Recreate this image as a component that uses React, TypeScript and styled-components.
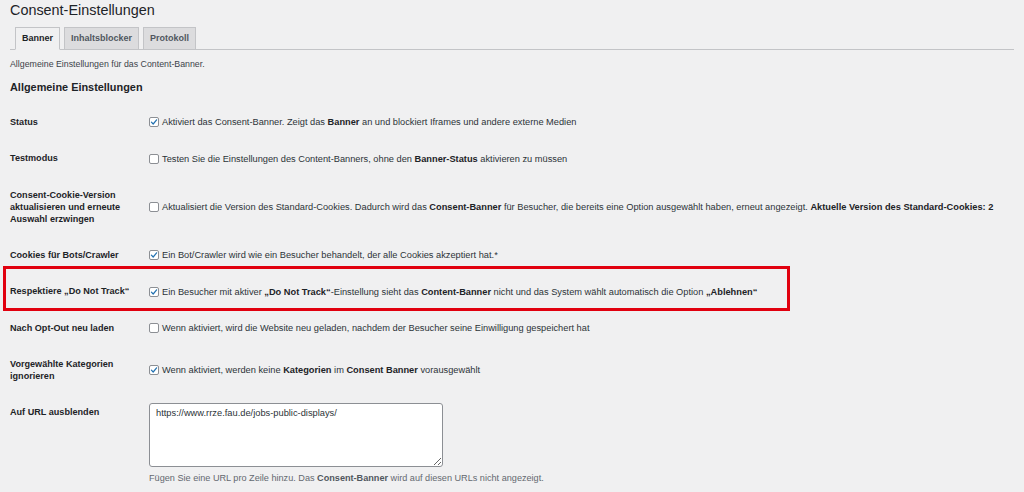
import React from 'react';
import styled, {createGlobalStyle} from 'styled-components';

const GlobalStyle = createGlobalStyle`
  html, body {
    margin: 0;
    padding: 0;
    background: #f0f0f1;
  }
  body {
    font-family: 'Liberation Sans', Arial, sans-serif;
    color: #2c3338;
  }
`;

const Page = styled.div`
  padding: 0 10px;
  width: 1004px;
`;

const Title = styled.h1`
  margin: 0;
  padding-top: 1px;
  font-size: 14.4px;
  font-weight: 400;
  line-height: 19px;
  color: #1d2327;
`;

const TabBar = styled.nav`
  display: flex;
  gap: 4px;
  margin-top: 7px;
  padding-left: 5px;
  border-bottom: 1px solid #c3c4c7;
`;

const Tab = styled.a<{$active?: boolean}>`
  display: block;
  height: 21px;
  line-height: 21px;
  padding: 0 6px;
  margin-bottom: ${p => (p.$active ? '-1px' : '0')};
  font-size: 9px;
  font-weight: 700;
  text-decoration: none;
  color: ${p => (p.$active ? '#1d2327' : '#50575e')};
  background: ${p => (p.$active ? '#f0f0f1' : '#dcdcde')};
  border: 1px solid #c3c4c7;
  border-bottom: ${p => (p.$active ? '1px solid #f0f0f1' : 'none')};
  cursor: pointer;
`;

const Intro = styled.p`
  margin: 9px 0 0;
  font-size: 8.8px;
  line-height: 11px;
  color: #3c434a;
`;

const SectionTitle = styled.h2`
  margin: 10px 0 10px;
  font-size: 10.9px;
  font-weight: 700;
  line-height: 14px;
  color: #1d2327;
`;

const Row = styled.div<{$highlight?: boolean}>`
  position: relative;
  display: flex;
  align-items: stretch;

  ${p =>
    p.$highlight &&
    `
    &::after {
      content: '';
      position: absolute;
      left: -7px;
      top: -7.5px;
      width: 781px;
      height: 39.5px;
      border: 3px solid #e1000f;
      pointer-events: none;
    }
  `}
`;

const Label = styled.div`
  flex: 0 0 129px;
  padding: 12px 10px 12.35px 0;
  font-size: 9.1px;
  font-weight: 700;
  line-height: 12px;
  color: #1d2327;
`;

const Field = styled.div<{$top?: boolean}>`
  flex: 1;
  display: flex;
  flex-direction: column;
  justify-content: ${p => (p.$top ? 'flex-start' : 'center')};
  padding: 9px 0;
`;

const CheckLine = styled.label`
  display: flex;
  align-items: center;
  gap: 3px;
  font-size: 9.25px;
  line-height: 12px;
  white-space: nowrap;
  color: #2c3338;

  b {
    font-weight: 700;
    color: #1d2327;
  }
`;

const Box = styled.span`
  flex: 0 0 auto;
  display: inline-flex;
  align-items: center;
  justify-content: center;
  width: 8px;
  height: 8px;
  background: #fff;
  border: 1px solid #8c8f94;
  border-radius: 2px;
`;

const UrlArea = styled.textarea`
  box-sizing: border-box;
  width: 294px;
  height: 64px;
  margin: 0;
  padding: 3px 6px;
  font-family: inherit;
  font-size: 9.3px;
  line-height: 12px;
  color: #2c3338;
  background: #fff;
  border: 1px solid #8c8f94;
  border-radius: 3px;
  outline: none;
`;

const Help = styled.p`
  margin: 5.5px 0 0;
  font-size: 9.15px;
  line-height: 11px;
  color: #646970;

  b {
    font-weight: 700;
    color: #50575e;
  }
`;

const Checkbox: React.FC<{checked?: boolean}> = ({checked}) => (
  <Box>
    {checked && (
      <svg width="8" height="8" viewBox="0 0 8 8">
        <polyline
          points="1.4,4.2 3.2,6 6.6,1.8"
          fill="none"
          stroke="#2271b1"
          strokeWidth="1.2"
          strokeLinecap="round"
          strokeLinejoin="round"
        />
      </svg>
    )}
  </Box>
);

interface Setting {
  label: React.ReactNode;
  checked: boolean;
  text: React.ReactNode;
  highlight?: boolean;
}

const settings: Setting[] = [
  {
    label: 'Status',
    checked: true,
    text: (
      <>
        Aktiviert das Consent-Banner. Zeigt das <b>Banner</b> an und blockiert Iframes und andere
        externe Medien
      </>
    )
  },
  {
    label: 'Testmodus',
    checked: false,
    text: (
      <>
        Testen Sie die Einstellungen des Content-Banners, ohne den <b>Banner-Status</b> aktivieren
        zu müssen
      </>
    )
  },
  {
    label: (
      <>
        Consent-Cookie-Version
        <br />
        aktualisieren und erneute
        <br />
        Auswahl erzwingen
      </>
    ),
    checked: false,
    text: (
      <>
        Aktualisiert die Version des Standard-Cookies. Dadurch wird das <b>Consent-Banner</b> für
        Besucher, die bereits eine Option ausgewählt haben, erneut angezeigt.{' '}
        <b>Aktuelle Version des Standard-Cookies: 2</b>
      </>
    )
  },
  {
    label: 'Cookies für Bots/Crawler',
    checked: true,
    text: <>Ein Bot/Crawler wird wie ein Besucher behandelt, der alle Cookies akzeptiert hat.*</>
  },
  {
    label: 'Respektiere „Do Not Track“',
    checked: true,
    highlight: true,
    text: (
      <>
        Ein Besucher mit aktiver <b>„Do Not Track“</b>-Einstellung sieht das <b>Content-Banner</b>{' '}
        nicht und das System wählt automatisch die Option <b>„Ablehnen“</b>
      </>
    )
  },
  {
    label: 'Nach Opt-Out neu laden',
    checked: false,
    text: (
      <>Wenn aktiviert, wird die Website neu geladen, nachdem der Besucher seine Einwilligung gespeichert hat</>
    )
  },
  {
    label: (
      <>
        Vorgewählte Kategorien
        <br />
        ignorieren
      </>
    ),
    checked: true,
    text: (
      <>
        Wenn aktiviert, werden keine <b>Kategorien</b> im <b>Consent Banner</b> vorausgewählt
      </>
    )
  }
];

const App: React.FC = () => (
  <Page>
    <GlobalStyle />
    <Title>Consent-Einstellungen</Title>
    <TabBar>
      <Tab $active>Banner</Tab>
      <Tab>Inhaltsblocker</Tab>
      <Tab>Protokoll</Tab>
    </TabBar>
    <Intro>Allgemeine Einstellungen für das Content-Banner.</Intro>
    <SectionTitle>Allgemeine Einstellungen</SectionTitle>

    {settings.map((s, i) => (
      <Row key={i} $highlight={s.highlight}>
        <Label>{s.label}</Label>
        <Field>
          <CheckLine>
            <Checkbox checked={s.checked} />
            <span>{s.text}</span>
          </CheckLine>
        </Field>
      </Row>
    ))}

    <Row>
      <Label>Auf URL ausblenden</Label>
      <Field $top>
        <UrlArea defaultValue="https://www.rrze.fau.de/jobs-public-displays/" />
        <Help>
          Fügen Sie eine URL pro Zeile hinzu. Das <b>Consent-Banner</b> wird auf diesen URLs nicht
          angezeigt.
        </Help>
      </Field>
    </Row>
  </Page>
);

export default App;
